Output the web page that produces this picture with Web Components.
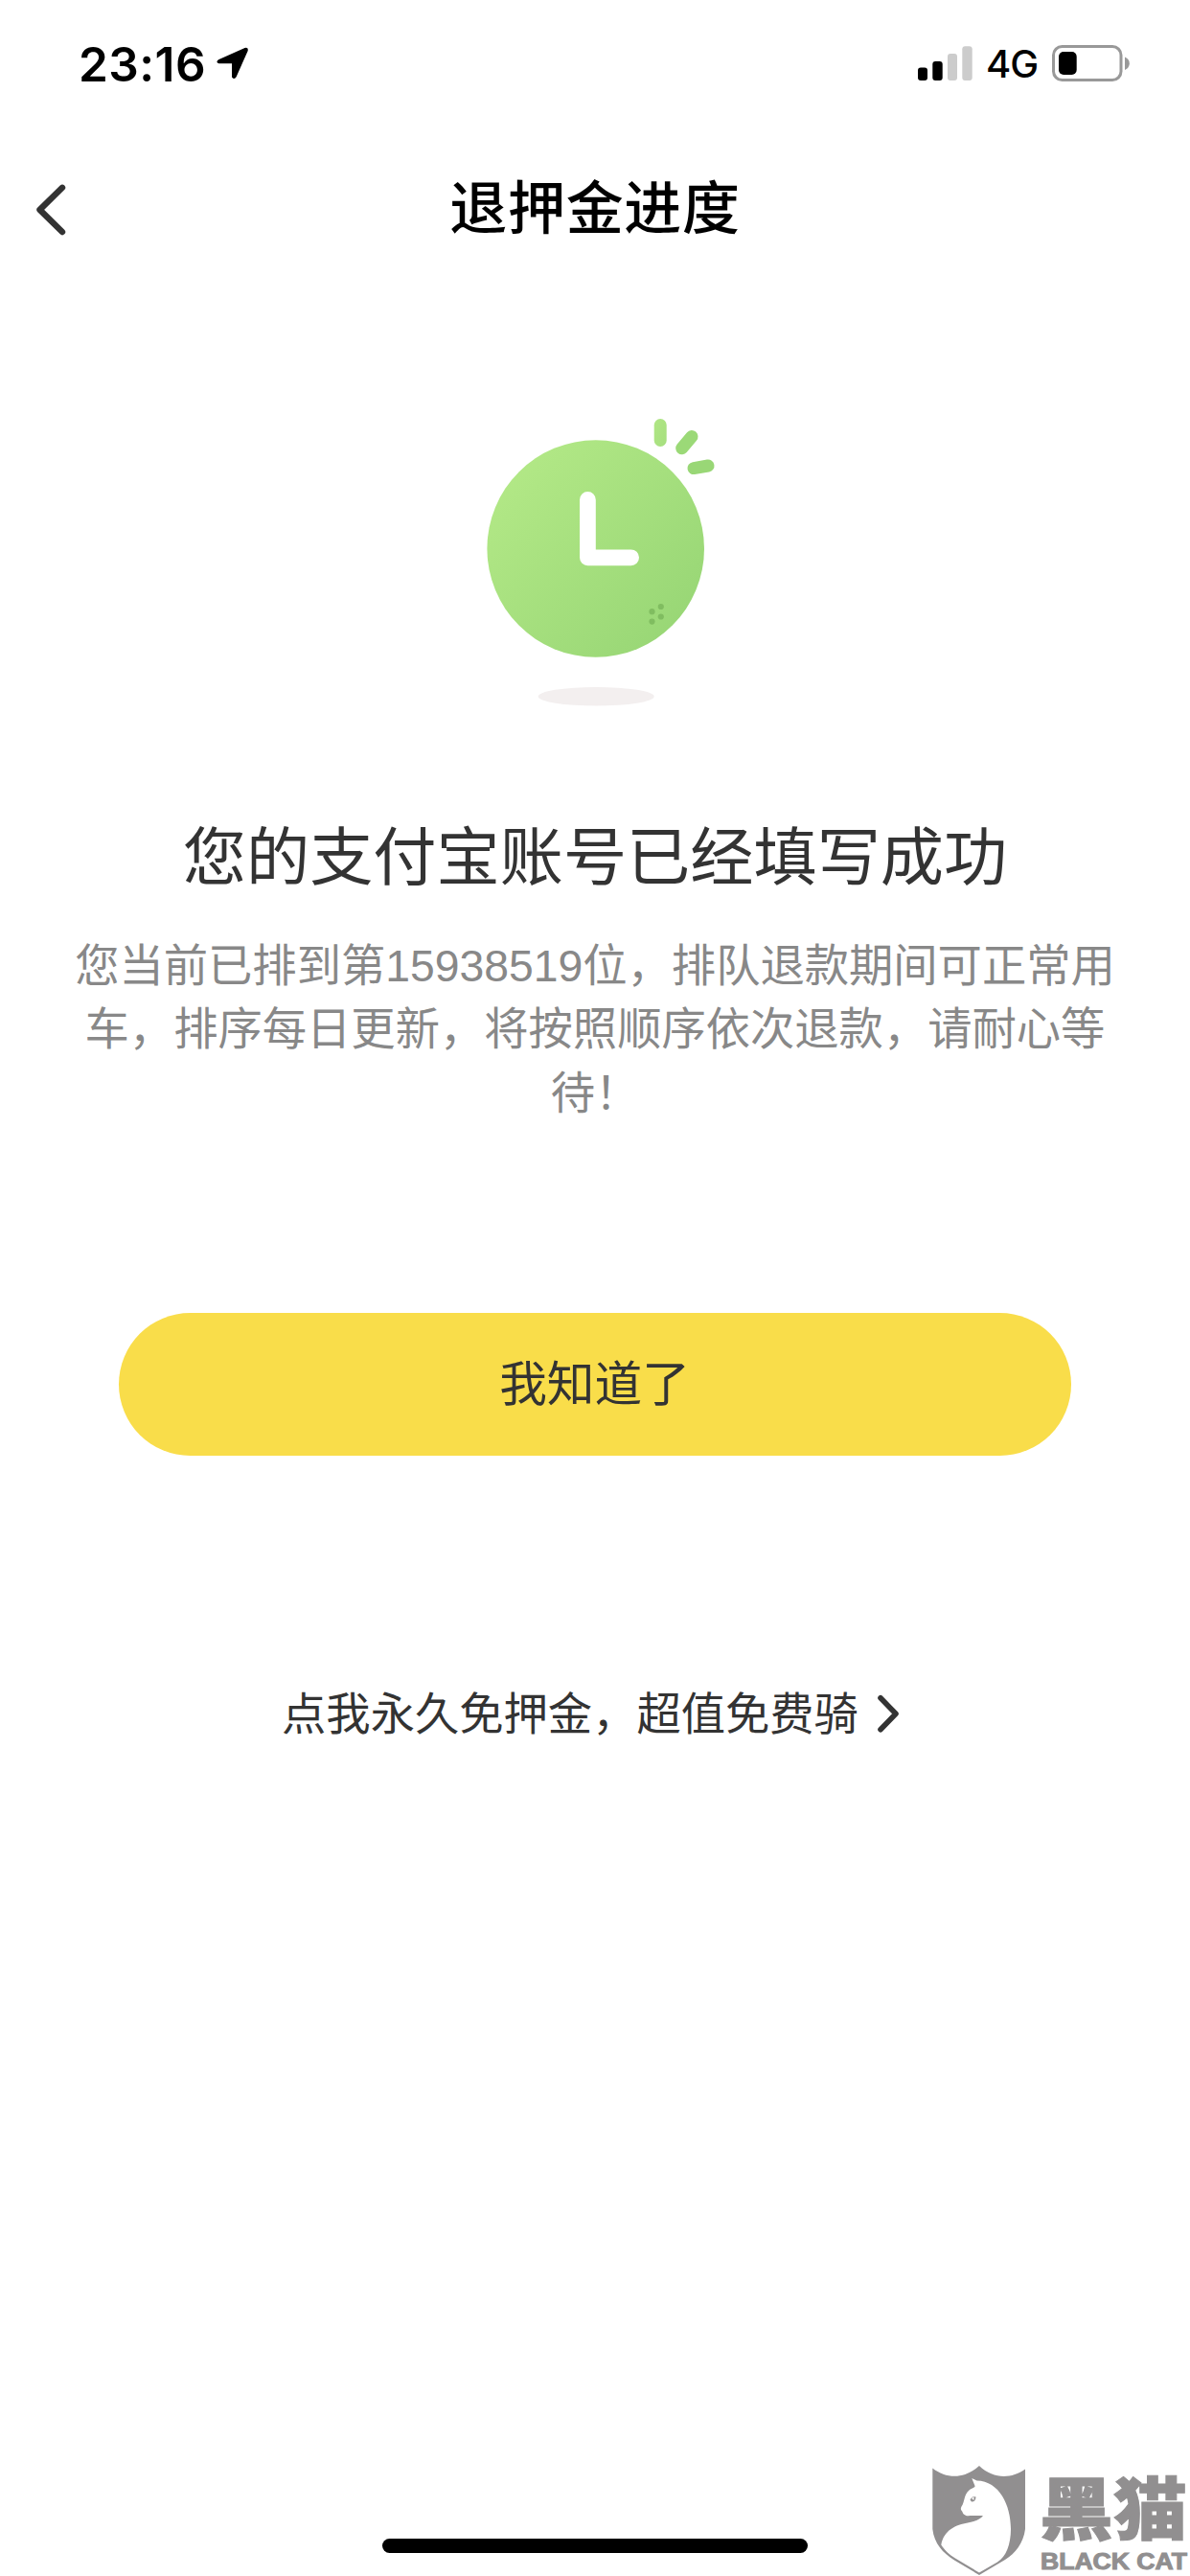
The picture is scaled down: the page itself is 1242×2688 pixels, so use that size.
<!DOCTYPE html>
<html lang="zh-CN">
<head>
<meta charset="utf-8">
<title>退押金进度</title>
<style>
html,body{margin:0;background:#fff}
body{font-family:"Liberation Sans","Noto Sans CJK SC",sans-serif;color:#333}
</style>
</head>
<body>
<refund-page>
  <status-bar slot="top" time="23:16" network="4G"></status-bar>
  <nav-header slot="top">退押金进度</nav-header>
  <clock-illustration></clock-illustration>
  <result-message>
    <span slot="title">您的支付宝账号已经填写成功</span>
    您当前已排到第15938519位，排队退款期间可正常用车，排序每日更新，将按照顺序依次退款，请耐心等待！
  </result-message>
  <pill-button>我知道了</pill-button>
  <promo-link>点我永久免押金，超值免费骑</promo-link>
  <home-indicator slot="bottom"></home-indicator>
  <cat-watermark slot="overlay"></cat-watermark>
</refund-page>
<script>
const define = (name, html, setup) => customElements.define(name, class extends HTMLElement {
  constructor() {
    super();
    this.attachShadow({ mode: 'open' }).innerHTML = html;
  }
  connectedCallback() { if (setup) setup(this, this.shadowRoot); }
});

define('refund-page', `
<style>
:host{display:flex;flex-direction:column;position:relative;width:1242px;height:2688px;background:#fff;overflow:hidden}
main{display:flex;flex-direction:column;align-items:center;flex:1}
</style>
<slot name="top"></slot>
<main><slot></slot></main>
<slot name="bottom"></slot>
<slot name="overlay"></slot>`);

define('status-bar', `
<style>
:host{display:flex;justify-content:space-between;align-items:center;height:132px;box-sizing:border-box;padding:0 62px 0 82px;color:#000;font-family:Inter,sans-serif}
div{display:flex;align-items:center}
.time{font-size:49.5px;font-weight:600;line-height:60px;letter-spacing:.5px;width:144px;white-space:nowrap;padding-top:1px}
.net{font-size:40px;font-weight:500;line-height:48px;width:69px;margin-left:13px;letter-spacing:-1px;white-space:nowrap;padding-top:2px}
svg{display:block;flex:none}
</style>
<div><span class="time"></span>
<svg width="34" height="34" viewBox="226 49 34 34"><path d="M228 62.2 255.5 49.9Q259.6 49 258.6 53.2L246.6 80.2Q244.6 83.6 242 80.4V66.3H228.4Q224.6 65 228 62.2Z"/></svg></div>
<div>
<svg width="58" height="38" viewBox="958 47 58 38"><rect x="958" y="70.5" width="10" height="13.5" rx="3"/><rect x="973.3" y="64" width="10.4" height="20" rx="3"/><g fill="#ccc"><rect x="989" y="56" width="10" height="28" rx="3"/><rect x="1004.3" y="48.3" width="10.4" height="35.7" rx="3"/></g></svg>
<span class="net"></span>
<svg width="82" height="38" viewBox="1098 47 82 38"><rect x="1099.5" y="48.5" width="70.5" height="35" rx="9" fill="none" stroke="#999" stroke-width="3"/><rect x="1105" y="54" width="18.7" height="24" rx="5"/><path d="M1174 59.5Q1178.8 61.5 1178.8 66.2T1174 73Z" fill="#999"/></svg>
</div>`, (el, root) => {
  root.querySelector('.time').textContent = el.getAttribute('time');
  root.querySelector('.net').textContent = el.getAttribute('network');
});

define('nav-header', `
<style>
:host{display:grid;grid-template-columns:120px 1fr 120px;align-items:center;height:173px;color:#000}
h1{margin:0;text-align:center;font-size:60px;line-height:80px;font-weight:500;letter-spacing:.7px}
svg{display:block;margin-left:36px}
</style>
<svg width="36" height="60" viewBox="36 188.5 36 60"><path d="M65 195.3 41.5 218.4 65 241.5" fill="none" stroke="#333" stroke-width="6.4" stroke-linecap="round" stroke-linejoin="round"/></svg>
<h1><slot></slot></h1>`);

define('clock-illustration', `
<style>:host{display:block;margin-top:105px}svg{display:block}</style>
<svg width="318" height="350" viewBox="462 410 318 350">
<defs>
<linearGradient id="face" x1=".1" y1=".15" x2=".88" y2=".85"><stop stop-color="#b2e886"/><stop offset="1" stop-color="#99d776"/></linearGradient>
<linearGradient id="ray" x1="0" y1="0" x2="1" y2="1"><stop stop-color="#b0e684"/><stop offset="1" stop-color="#a6df7f"/></linearGradient>
</defs>
<circle cx="621.7" cy="572.5" r="113.3" fill="url(#face)"/>
<rect x="682.7" y="437" width="13" height="29" rx="6.5" fill="url(#ray)"/>
<path d="M711.7 467.7 722 455.5" fill="none" stroke="#9bd977" stroke-width="13" stroke-linecap="round"/>
<path d="M724 488.6 739 486" fill="none" stroke="#99d776" stroke-width="13" stroke-linecap="round"/>
<path d="M613.4 521.4V581.8H658.6" fill="none" stroke="#fff" stroke-width="16.8" stroke-linecap="round" stroke-linejoin="round"/>
<g fill="#80bd60"><circle cx="689.8" cy="633" r="3.1"/><circle cx="680.5" cy="638.2" r="3.1"/><circle cx="689.8" cy="643.5" r="3.1"/><circle cx="680.5" cy="648.6" r="3.1"/></g>
<ellipse cx="622.2" cy="726.7" rx="60.5" ry="9.8" fill="#f3efef"/>
</svg>`);

define('result-message', `
<style>
:host{display:flex;flex-direction:column;align-items:center;gap:35px;margin-top:90px}
h2{margin:0;font-size:66.2px;line-height:90px;font-weight:400;color:#333;white-space:nowrap}
p{margin:0;width:1094px;text-align:center;font-size:46.3px;line-height:66.3px;color:#888}
</style>
<h2><slot name="title"></slot></h2>
<p><slot></slot></p>`);

define('pill-button', `
<style>
:host{display:block;margin-top:196px}
button{display:flex;align-items:center;justify-content:center;width:994px;height:149px;padding:1px 1px 0 0;border:0;border-radius:75px;background:#f9dd4a;color:#333;font:400 49.7px/70px "Liberation Sans","Noto Sans CJK SC",sans-serif}
</style>
<button><slot></slot></button>`);

define('promo-link', `
<style>
:host{display:flex;align-items:center;margin-top:240px;height:60px;font-size:46.3px;line-height:60px;color:#333;white-space:nowrap}
svg{display:block;margin:0 6px 0 16px}
</style>
<slot></slot>
<svg width="30" height="44" viewBox="912 1766 30 44"><path d="M919 1770.8 935 1787.3 919 1803.8" fill="none" stroke="#333" stroke-width="5.6" stroke-linecap="round" stroke-linejoin="round"/></svg>`);

define('home-indicator', `
<style>:host{display:flex;justify-content:center;padding-bottom:24px}i{width:444px;height:15px;border-radius:8px;background:#000}</style><i></i>`);

define('cat-watermark', `
<style>
:host{position:absolute;right:0;bottom:0;display:flex;align-items:flex-end;width:270px;height:118px}
svg{display:block}
</style>
<svg width="270" height="118" viewBox="972 2570 270 118" fill="#918f90">
<path d="M973.3 2575.5C988 2587 1007 2587 1022 2573 1037 2587 1055 2587 1070 2576.5V2639C1068 2654 1060 2664 1049 2671L1022 2687 996 2671.5C984 2664 975 2654 973.3 2639Z"/>
<path fill="#fff" d="M1014.300 2586 1019.500 2588.500C1043 2589 1055 2614 1055 2639C1055 2655 1050 2668 1041 2673.500L1022 2684.500 997 2669.500C991 2666 985 2660 982.300 2655.500C985 2640 998 2634.500 1010 2632.500C1018 2631 1023 2629 1026 2625H1012C1009 2626 1005 2624 1004.500 2621C1002.500 2619 1002.500 2617.500 1003.500 2615.500C1007 2611 1006 2603 1011 2599 1014 2596 1018 2596 1017.500 2594Z"/>
<path d="M1012.5 2608.5Q1015 2603.5 1018.5 2605.5 1018 2611 1014 2610.5Z"/><path d="M1014 2607 1016.500 2605V2609Z" fill="#fff"/>
<text x="1085" y="2643.500" font-family="Liberation Sans, Noto Sans CJK SC, sans-serif" font-weight="900" font-size="71" textLength="154" lengthAdjust="spacingAndGlyphs" stroke="#918f90" stroke-width="1">黑猫</text>
<text x="1086" y="2680.500" font-family="Liberation Sans, sans-serif" font-weight="700" font-size="23" textLength="153" lengthAdjust="spacingAndGlyphs" stroke="#918f90" stroke-width="1">BLACK CAT</text>
</svg>`);
</script>
</body>
</html>
